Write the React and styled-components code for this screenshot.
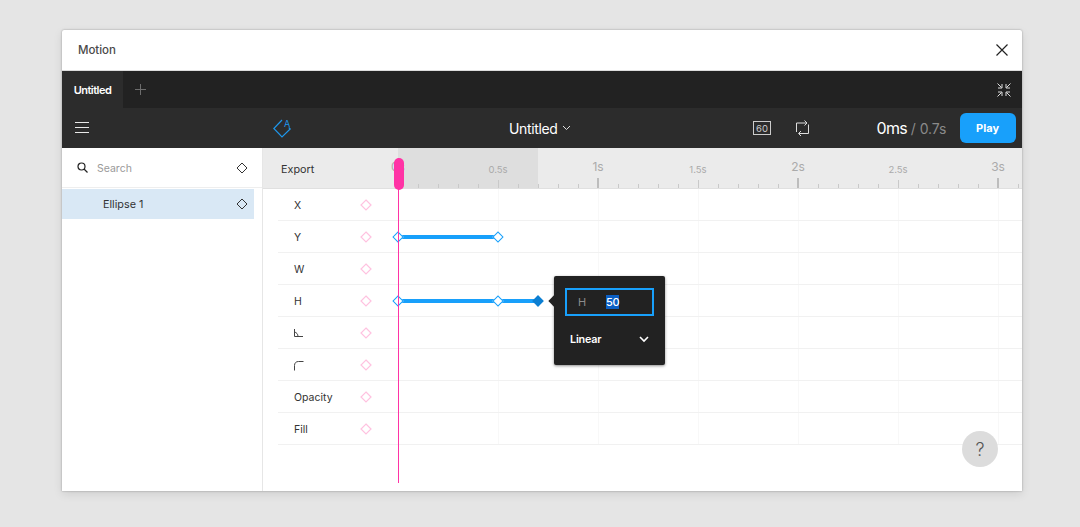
import React from 'react';
import styled, { createGlobalStyle } from 'styled-components';

const GlobalStyle = createGlobalStyle`
  html, body {
    margin: 0;
    padding: 0;
    height: 100%;
    background: #e5e5e5;
    font-family: Inter, "Liberation Sans", sans-serif;
  }
`;

const Page = styled.div`
  width: 1080px;
  height: 527px;
  padding: 30px 58px 36px 62px;
  box-sizing: border-box;
  overflow: hidden;
`;
const Window = styled.div`
  position: relative;
  width: 960px;
  height: 461px;
  display: flex;
  flex-direction: column;
  background: #fff;
  border-radius: 2px 2px 0 0;
  box-shadow: 0 0 2px rgba(0, 0, 0, 0.35), 0 3px 10px rgba(0, 0, 0, 0.1);
  overflow: hidden;
`;
const TitleBar = styled.div`
  height: 41px;
  box-sizing: border-box;
  flex: none;
  display: flex;
  align-items: center;
  justify-content: space-between;
  padding: 0 14px 0 16px;
  border-bottom: 1px solid #dcdcdc;
`;
const TitleText = styled.div`
  font-size: 11.5px;
  font-weight: 500;
  letter-spacing: -0.05px;
  color: #4a4a4a;
`;
const TabBar = styled.div`
  height: 37px;
  flex: none;
  display: flex;
  align-items: center;
  background: #222;
  padding-right: 11px;
`;
const Tab = styled.div`
  width: 61px;
  height: 100%;
  display: flex;
  align-items: center;
  justify-content: center;
  background: #2c2c2c;
  color: #fff;
  font-size: 11px;
  font-weight: 600;
  letter-spacing: -0.5px;
`;
const AddTab = styled.div`
  margin-left: 11px;
  display: flex;
  flex: 1;
`;
const Toolbar = styled.div`
  height: 40px;
  flex: none;
  display: flex;
  align-items: center;
  background: #2c2c2c;
  color: #fff;
`;
const ToolIcon = styled.div`
  display: flex;
  margin-left: ${p => p.$left}px;
`;
const DocTitle = styled.div`
  display: flex;
  align-items: center;
  gap: 4px;
  margin-left: 217px;
  font-size: 14px;
  letter-spacing: -0.35px;
`;
const Time = styled.div`
  margin-left: 68px;
  font-size: 16px;
  letter-spacing: -0.7px;
  white-space: nowrap;
  width: 83px;
  span {
    font-size: 14px;
    letter-spacing: -0.1px;
    color: #8a8a8a;
  }
`;
const PlayButton = styled.button`
  width: 56px;
  height: 30px;
  padding: 0;
  border: 0;
  border-radius: 6px;
  background: #18a0fb;
  color: #fff;
  font-family: inherit;
  font-size: 11px;
  font-weight: 700;
`;
const Body = styled.div`
  flex: 1;
  display: flex;
  min-height: 0;
`;
const Sidebar = styled.div`
  width: 201px;
  flex: none;
  box-sizing: border-box;
  border-right: 1px solid #e6e6e6;
`;
const SearchRow = styled.div`
  height: 40px;
  box-sizing: border-box;
  display: flex;
  align-items: center;
  gap: 9px;
  padding: 0 14px 0 15px;
  border-bottom: 1px solid #eee;
  color: #9a9a9a;
  font-size: 10.5px;
`;
const SearchLabel = styled.div`
  flex: 1;
  padding-top: 2px;
`;
const LayerRow = styled.div`
  width: 192px;
  height: 30px;
  margin-top: 1px;
  box-sizing: border-box;
  display: flex;
  align-items: center;
  justify-content: space-between;
  padding: 0 6px 0 41px;
  background: #d9e8f5;
  color: #333;
  font-size: 10.8px;
`;
const Main = styled.div`
  position: relative;
  flex: 1;
  min-width: 0;
`;
const Ruler = styled.div`
  height: 41px;
  box-sizing: border-box;
  display: flex;
  background: #ebebeb;
  border-bottom: 1px solid #e0e0e0;
`;
const ExportLabel = styled.div`
  width: 125px;
  flex: none;
  padding-left: 18px;
  box-sizing: border-box;
  line-height: 44px;
  font-size: 10.8px;
  color: #333;
`;
const RulerTicks = styled.div`
  flex: 1;
  min-width: 0;
  display: flex;
  background: linear-gradient(to right, #ebebeb 10px, #dedede 10px, #dedede 150px, transparent 150px);
`;
const TickCell = styled.div`
  width: 20px;
  flex: none;
  display: flex;
  flex-direction: column;
  align-items: center;
  justify-content: flex-end;
`;
const TickLabel = styled.div`
  white-space: nowrap;
  color: #aaa;
  font-size: ${p => (p.$major ? 12 : 9.5)}px;
  line-height: 12px;
  margin-bottom: ${p => (p.$major ? 5 : 4)}px;
`;
const TickMark = styled.div`
  width: ${p => (p.$kind === 'major' ? 2 : 1)}px;
  height: ${p => (p.$kind === 'major' ? 10 : p.$kind === 'half' ? 8 : 4)}px;
  background: ${p => (p.$kind === 'major' ? '#bdbdbd' : '#c9c9c9')};
`;
const Tracks = styled.div`
  margin-left: 15px;
`;
const TrackRow = styled.div`
  height: 32px;
  box-sizing: border-box;
  display: flex;
  align-items: center;
  border-bottom: 1px solid #f1f1f1;
`;
const TrackLabel = styled.div`
  width: 82px;
  flex: none;
  padding: 2px 0 0 16px;
  box-sizing: border-box;
  display: flex;
  color: #333;
  font-size: 10.5px;
`;
const AddKey = styled.div`
  width: 38px;
  flex: none;
  display: flex;
`;
const Lane = styled.div`
  position: relative;
  flex: 1;
  align-self: stretch;
  background-image: repeating-linear-gradient(to right, #f8f8f8 0, #f8f8f8 1px, transparent 1px, transparent 100px);
`;
const Segment = styled.div`
  position: absolute;
  top: 14px;
  height: 4px;
  background: #18a0fb;
`;
const Keyframe = styled.div`
  position: absolute;
  top: 12px;
  width: 8px;
  height: 8px;
  margin-left: -4px;
  box-sizing: border-box;
  transform: rotate(45deg);
  background: ${p => (p.$active ? '#0d7fd2' : '#fff')};
  border: 1px solid ${p => (p.$active ? '#0d7fd2' : '#18a0fb')};
`;
const Playhead = styled.div`
  position: absolute;
  left: 135px;
  top: 10px;
  width: 1px;
  height: 325px;
  background: #ff33a5;
  &::before {
    content: '';
    position: absolute;
    left: -4px;
    top: 0;
    width: 10px;
    height: 32px;
    border-radius: 5px;
    background: #ff33a5;
  }
`;
const Popover = styled.div`
  position: absolute;
  left: 291px;
  top: 128px;
  width: 111px;
  height: 89px;
  box-sizing: border-box;
  padding: 12px 11px;
  border-radius: 2px;
  background: #222;
  box-shadow: 0 1px 3px rgba(0, 0, 0, 0.45);
  color: #fff;
  &::before {
    content: '';
    position: absolute;
    left: -4px;
    top: 21px;
    width: 8px;
    height: 8px;
    background: #222;
    transform: rotate(45deg);
  }
`;
const PopField = styled.div`
  height: 28px;
  box-sizing: border-box;
  display: flex;
  align-items: center;
  padding-left: 11px;
  border: 2px solid #18a0fb;
  font-size: 11px;
`;
const PopKey = styled.span`
  width: 28px;
  color: #8c8c8c;
`;
const Selected = styled.span`
  background: #0b5fc5;
  color: #fff;
  font-weight: 500;
  letter-spacing: -0.4px;
`;
const PopSelect = styled.div`
  display: flex;
  align-items: center;
  justify-content: space-between;
  margin-top: 17px;
  padding: 0 5px 0 5px;
  font-size: 10.8px;
  font-weight: 600;
  letter-spacing: -0.2px;
`;
const Help = styled.div`
  position: absolute;
  right: 24px;
  bottom: 24px;
  width: 36px;
  height: 36px;
  border-radius: 50%;
  display: flex;
  align-items: center;
  justify-content: center;
  background: #dcdcdc;
  color: #555;
  font-size: 18px;
  font-weight: 300;
`;

function Diamond({ color = '#333', size = 12, weight = 1 }) {
  return (
    <svg width={size} height={size} viewBox="0 0 12 12" fill="none">
      <path d="M6 1 11 6 6 11 1 6Z" stroke={color} strokeWidth={weight} />
    </svg>
  );
}

const ticks = Array.from({ length: 32 }, (_, i) => i);

// one tick is 0.1s, 20px wide
function tickInfo(i) {
  if (i % 10 === 0) return { kind: 'major', label: `${i / 10}s`, major: true };
  if (i % 5 === 0) return { kind: 'half', label: `${i / 10}s` };
  return { kind: 'small' };
}

const tracks = [
  { name: 'X' },
  { name: 'Y', segments: [[0, 100]], keys: [0, 100] },
  { name: 'W' },
  { name: 'H', segments: [[0, 140]], keys: [0, 100], active: 140 },
  {
    name: 'angle',
    icon: (
      <svg width="10" height="10" viewBox="0 1 10 10" fill="none" stroke="#444" strokeWidth="1">
        <path d="M.5 1v7.500H9" />
        <path d="M.5 4C2.500 4.500 4 6 4 8.500" />
      </svg>
    ),
  },
  {
    name: 'radius',
    icon: (
      <svg width="10" height="10" viewBox="0 0.5 10 10" fill="none" stroke="#444" strokeWidth="1">
        <path d="M.5 10V5C.5 2.500 2 1 4.500 1h5" />
      </svg>
    ),
  },
  { name: 'Opacity' },
  { name: 'Fill' },
];

export default function App() {
  return (
    <Page>
      <GlobalStyle />
      <Window>
        <TitleBar>
          <TitleText>Motion</TitleText>
          <svg width="12" height="12" viewBox="0 0 12 12" stroke="#222" strokeWidth="1.2">
            <path d="M.5.5l11 11M11.500.5l-11 11" />
          </svg>
        </TitleBar>
        <TabBar>
          <Tab>Untitled</Tab>
          <AddTab>
            <svg width="13" height="13" viewBox="0 0 13 13" stroke="#6d6d6d" strokeWidth="1">
              <path d="M6.500 1v11M1 6.500h11" />
            </svg>
          </AddTab>
          <svg width="14" height="14" viewBox="0 0 14 14" fill="none" stroke="#ddd" strokeWidth="1">
            <path d="M.5.5l4 4M5 1v4H1M13.500.5l-4 4M9 1v4h4M.5 13.500l4-4M1 9h4v4M13.500 13.500l-4-4M13 9H9v4" />
          </svg>
        </TabBar>
        <Toolbar>
          <ToolIcon $left={13}>
            <svg width="14" height="12" viewBox="0 0 14 12" stroke="#e8e8e8" strokeWidth="1">
              <path d="M0 .5h14M0 5.500h14M0 10.500h14" />
            </svg>
          </ToolIcon>
          <ToolIcon $left={184}>
            <svg width="19" height="20" viewBox="0 0 19 20" fill="none" stroke="#1e96ea" strokeWidth="1.200">
              <path d="M9 2 .8 10.500 9 19l8.200-8-1.500-1.500" />
              <text x="14" y="8.500" textAnchor="middle" fontSize="9" stroke="none" fill="#1e96ea" fontFamily="Inter, sans-serif">A</text>
            </svg>
          </ToolIcon>
          <DocTitle>
            Untitled
            <svg width="9" height="6" viewBox="0 0 9 6" fill="none" stroke="#ddd" strokeWidth="1">
              <path d="M1 1l3.500 3.500L8 1" />
            </svg>
          </DocTitle>
          <ToolIcon $left={182}>
            <svg width="18" height="14" viewBox="0 0 18 14" fill="none">
              <rect x=".5" y=".5" width="17" height="13" stroke="#ccc" />
              <text x="9" y="10.500" textAnchor="middle" fontSize="9.500" fill="#ccc" fontFamily="Inter, sans-serif">60</text>
            </svg>
          </ToolIcon>
          <ToolIcon $left={25}>
            <svg width="13" height="17" viewBox="0 0 13 17" fill="none" stroke="#ddd" strokeWidth="1">
              <path d="M10 3H.5v9M3 13.500h9.500v-9" />
              <path d="M8.500.5 11 3 8.500 5.500M5 11 2.500 13.500 5 16" />
            </svg>
          </ToolIcon>
          <Time>0ms <span>/ 0.7s</span></Time>
          <PlayButton>Play</PlayButton>
        </Toolbar>
        <Body>
          <Sidebar>
            <SearchRow>
              <svg width="11" height="11" viewBox="0 0 11 11" fill="none" stroke="#222" strokeWidth="1.200">
                <circle cx="4.500" cy="4.500" r="3.500" />
                <path d="M7 7l3.500 3.500" />
              </svg>
              <SearchLabel>Search</SearchLabel>
              <Diamond />
            </SearchRow>
            <LayerRow>
              Ellipse 1
              <Diamond />
            </LayerRow>
          </Sidebar>
          <Main>
            <Ruler>
              <ExportLabel>Export</ExportLabel>
              <RulerTicks>
                {ticks.map(i => {
                  const t = tickInfo(i);
                  return (
                    <TickCell key={i}>
                      {t.label && <TickLabel $major={t.major}>{t.label}</TickLabel>}
                      <TickMark $kind={t.kind} />
                    </TickCell>
                  );
                })}
              </RulerTicks>
            </Ruler>
            <Tracks>
              {tracks.map(track => (
                <TrackRow key={track.name}>
                  <TrackLabel>{track.icon || track.name}</TrackLabel>
                  <AddKey>
                    <Diamond color="#ffc2e0" weight={1.2} />
                  </AddKey>
                  <Lane>
                    {track.segments && track.segments.map(s => (
                      <Segment key={s[0]} style={{ left: s[0], width: s[1] - s[0] }} />
                    ))}
                    {track.keys && track.keys.map(k => (
                      <Keyframe key={k} style={{ left: k }} />
                    ))}
                    {track.active && <Keyframe $active style={{ left: track.active }} />}
                  </Lane>
                </TrackRow>
              ))}
            </Tracks>
            <Playhead />
            <Popover>
              <PopField>
                <PopKey>H</PopKey>
                <Selected>50</Selected>
              </PopField>
              <PopSelect>
                Linear
                <svg width="10" height="7" viewBox="0 0 10 7" fill="none" stroke="#fff" strokeWidth="1.600">
                  <path d="M1 1l4 4 4-4" />
                </svg>
              </PopSelect>
            </Popover>
            <Help>?</Help>
          </Main>
        </Body>
      </Window>
    </Page>
  );
}
